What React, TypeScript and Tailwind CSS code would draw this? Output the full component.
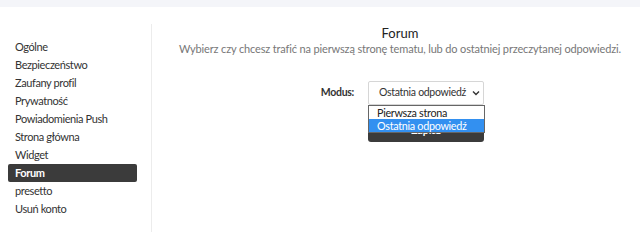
import React from "react";

const items = [
  "Ogólne",
  "Bezpieczeństwo",
  "Zaufany profil",
  "Prywatność",
  "Powiadomienia Push",
  "Strona główna",
  "Widget",
  "Forum",
  "presetto",
  "Usuń konto",
];

export default function App() {
  return (
    <div
      className="w-[640px] h-[232px] bg-white overflow-hidden text-[#333] whitespace-nowrap"
      style={{ fontFamily: 'Lato, "Noto Sans", sans-serif' }}
    >
      <div className="h-[7px] bg-[#f4f5f9]" />
      <div className="flex h-[225px]">
        <div className="w-[152px] shrink-0 flex flex-col">
          <div className="h-[17px]" />
          <div className="flex-1 border-r border-[#ececec] pt-[14px] pl-[8px] pr-[14px]">
            {items.map((it) => (
              <div
                key={it}
                className={
                  "h-[18px] flex items-center pl-[7px] text-[11px] tracking-[-0.4px] rounded-[2px] " +
                  (it === "Forum"
                    ? "bg-[#3b3b3b] text-white font-bold"
                    : "text-[#333]")
                }
              >
                {it}
              </div>
            ))}
          </div>
        </div>
        <div className="flex-1 flex flex-col items-center pl-[8px]">
          <div className="mt-[17px] text-[13px] leading-[18px] text-[#222]">Forum</div>
          <div className="mt-[-1px] text-[11px] tracking-[-0.15px] leading-[16px] text-[#777]">
            Wybierz czy chcesz trafić na pierwszą stronę tematu, lub do ostatniej przeczytanej odpowiedzi.
          </div>
          <div className="mt-[24px] flex mr-[12px]">
            <div className="w-[50px] h-[24px] flex items-center justify-end text-[10.5px] tracking-[-0.3px] font-bold text-[#333]">
              Modus:
            </div>
            <div className="ml-[14px] w-[116px] relative">
              <div className="h-[24px] border border-[#d6d6d6] rounded-[2px] flex items-center pl-[10px] pr-[3px] text-[10.5px] tracking-[-0.3px] text-[#333] bg-white">
                <span className="flex-1">Ostatnia odpowiedź</span>
                <svg width="8" height="6" viewBox="0 0 8 6">
                  <path d="M1 1.5 L4 4.5 L7 1.5" fill="none" stroke="#333" strokeWidth="1.4" />
                </svg>
              </div>
              <div className="mt-[15px] h-[22px] bg-[#3b3b3b] rounded-[3px] flex items-center justify-center text-white text-[10.5px] font-bold">
                Zapisz
              </div>
              <div className="absolute left-0 top-[24px] w-[117px] border border-[#666] bg-white text-[10.8px] tracking-[-0.3px] leading-[13px]">
                <div className="pl-[8px] h-[13px] flex items-center text-[#222]">Pierwsza strona</div>
                <div className="pl-[8px] h-[13px] flex items-center bg-[#3390f0] text-white">Ostatnia odpowiedź</div>
              </div>
            </div>
          </div>
        </div>
      </div>
    </div>
  );
}
